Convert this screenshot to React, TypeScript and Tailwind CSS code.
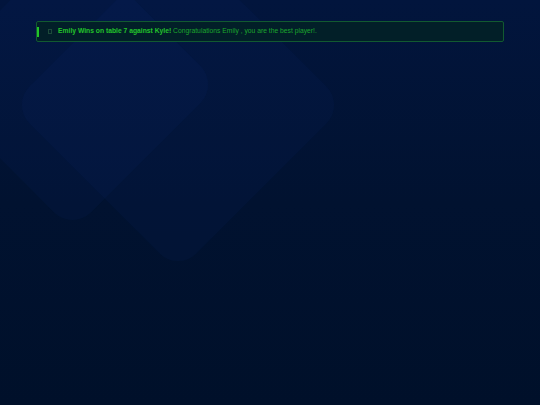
export default function App() {
  return (
    <div className="relative h-[405px] w-[540px] overflow-hidden bg-linear-to-b from-[#02153d] via-[#011230] to-[#00102a] font-['Liberation_Sans',Arial,sans-serif]">
      {/* background diamonds */}
      <div className="absolute left-[-31px] top-[-19px] h-[207px] w-[207px] rotate-45 rounded-[26px] bg-[#1a3cb0]/[0.06]" />
      <div className="absolute left-[60px] top-[-13px] h-[236px] w-[236px] rotate-45 rounded-[26px] bg-[#1a3cb0]/[0.06]" />

      <div className="relative px-[36px] pt-[21px]">
        <div className="flex h-[21px] items-center rounded-[2px] border border-[#125a30] bg-[#021f28]">
          <div className="h-[10px] w-[2px] bg-[#22c52a]" />
          <div className="ml-[9px] h-[5px] w-[4px] border border-[#1d4a3a]" />
          <p className="ml-[6px] whitespace-nowrap text-[6.75px] leading-none text-[#1ca62c]">
            <span className="font-bold text-[#22c42a]">Emily Wins on table 7 against Kyle!</span>{" "}
            Congratulations Emily , you are the best player!.
          </p>
        </div>
      </div>
    </div>
  );
}
